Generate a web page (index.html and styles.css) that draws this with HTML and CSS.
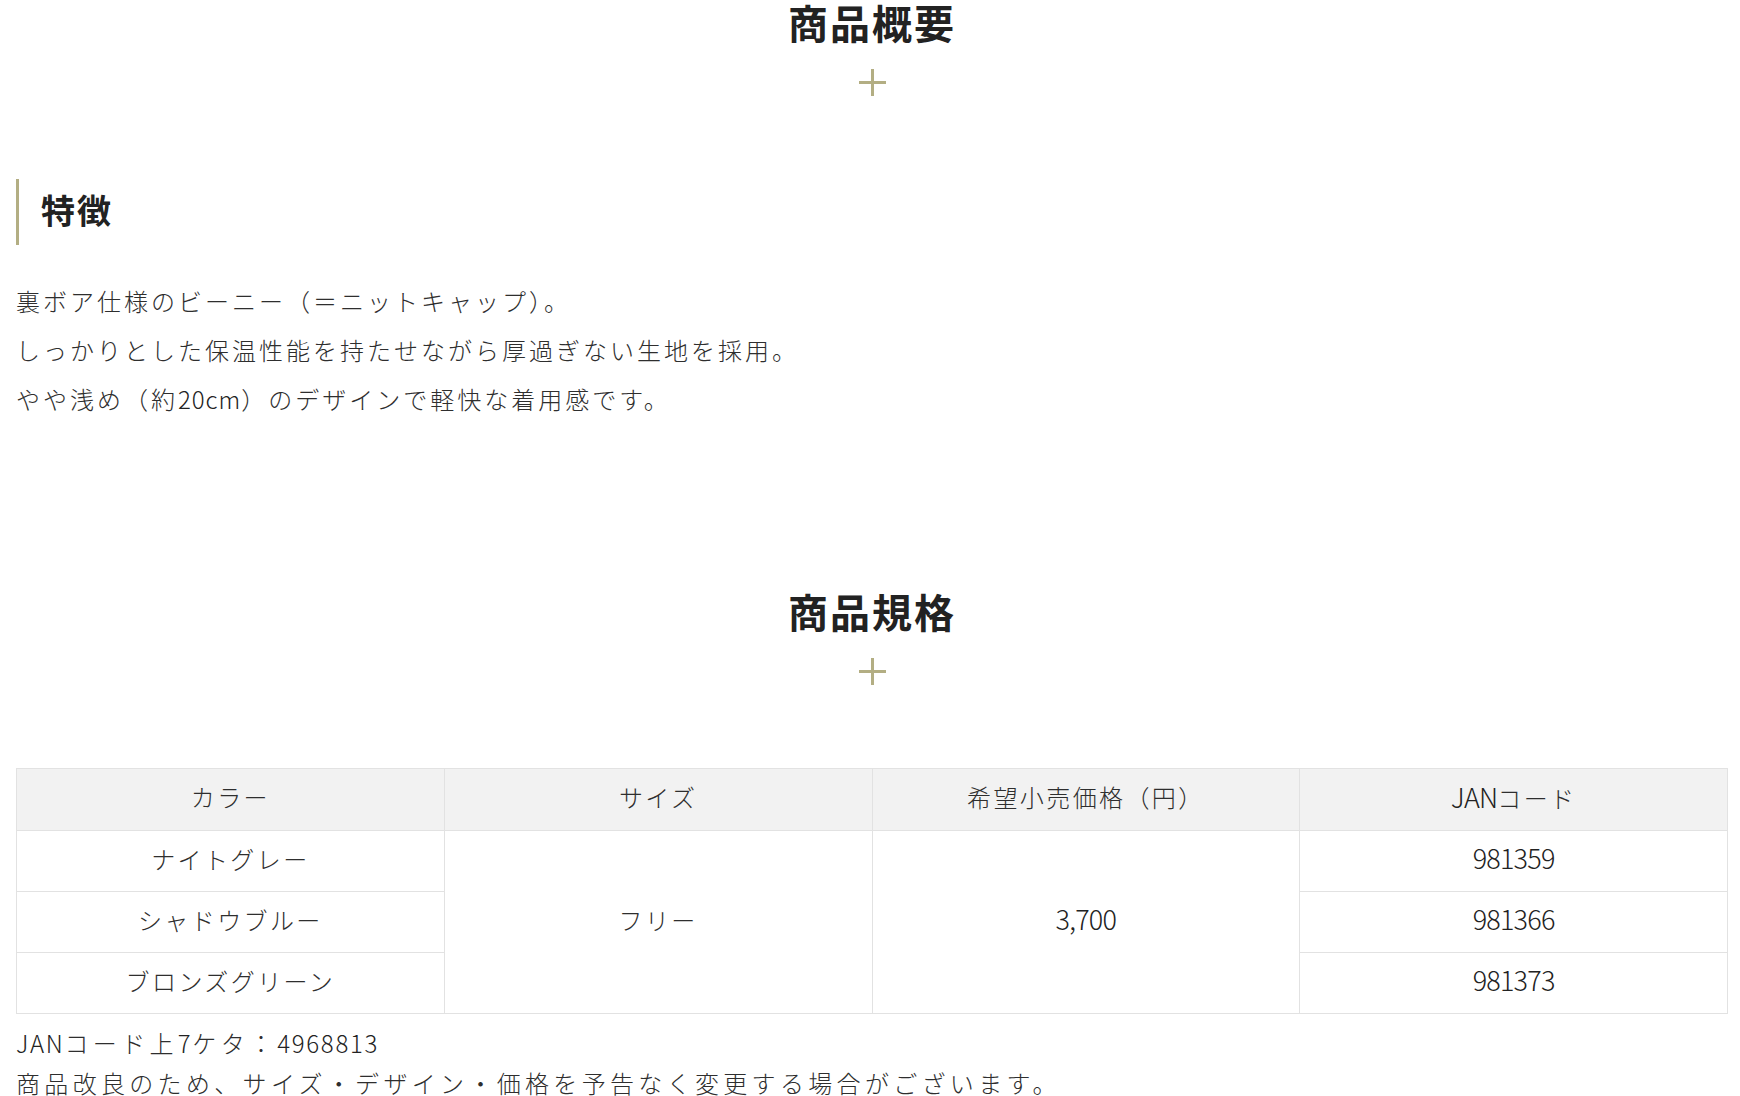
FILE: index.html
```html
<!DOCTYPE html>
<html lang="ja">
<head>
<meta charset="utf-8">
<title>商品概要</title>
<link rel="stylesheet" href="styles.css">
</head>
<body>
<div class="page">
  <section class="overview">
    <h2 class="sec-title">商品概要</h2>
    <div class="plus"></div>
    <h3 class="feature-title">特徴</h3>
    <p class="feature-text">裏ボア仕様のビーニー（＝ニットキャップ）。<br>しっかりとした保温性能を持たせながら厚過ぎない生地を採用。<br>やや浅め（約<span class="latin">20cm</span>）のデザインで軽快な着用感です。</p>
  </section>
  <section class="spec">
    <h2 class="sec-title">商品規格</h2>
    <div class="plus"></div>
    <table class="spec-table">
      <thead>
        <tr>
          <th>カラー</th>
          <th>サイズ</th>
          <th>希望小売価格（円）</th>
          <th><span class="num">JAN</span>コード</th>
        </tr>
      </thead>
      <tbody>
        <tr>
          <td>ナイトグレー</td>
          <td rowspan="3">フリー</td>
          <td rowspan="3"><span class="num">3,700</span></td>
          <td><span class="num">981359</span></td>
        </tr>
        <tr>
          <td>シャドウブルー</td>
          <td><span class="num">981366</span></td>
        </tr>
        <tr>
          <td>ブロンズグリーン</td>
          <td><span class="num">981373</span></td>
        </tr>
      </tbody>
    </table>
    <p class="note"><span class="note-latin">JAN</span>コード上<span class="note-latin">7</span>ケタ：<span class="note-latin">4968813</span><br>商品改良のため、サイズ・デザイン・価格を予告なく変更する場合がございます。</p>
  </section>
</div>
</body>
</html>
```

FILE: styles.css
```css
html, body {
  margin: 0;
  padding: 0;
  background: #fff;
}

body {
  font-family: "Noto Sans CJK JP", "Noto Sans", sans-serif;
  color: #2e2e2e;
  font-weight: 300;
}

.page {
  padding: 0 12px 0 16px;
}

.sec-title {
  margin: -2px 0 0;
  font-size: 40px;
  line-height: 48px;
  font-weight: 700;
  letter-spacing: 2px;
  text-align: center;
  color: #222;
}

.plus {
  width: 27px;
  height: 27px;
  margin: 23px auto 0;
  background:
    linear-gradient(#b3ae83, #b3ae83) center / 3px 100% no-repeat,
    linear-gradient(#b3ae83, #b3ae83) center / 100% 3px no-repeat;
}

.feature-title {
  box-sizing: border-box;
  margin: 83px 0 0;
  height: 66px;
  display: flex;
  align-items: center;
  padding: 0 0 6px 22px;
  border-left: 3px solid #b3ae83;
  font-size: 34px;
  font-weight: 700;
  letter-spacing: 2px;
  color: #222;
}

.feature-text {
  margin: 31px 0 0;
  font-size: 24px;
  line-height: 49px;
  letter-spacing: 0.125em;
}

.latin {
  letter-spacing: 0.04em;
  color: #222;
}

.spec {
  margin-top: 166px;
}

.spec-table {
  margin-top: 83px;
  width: 100%;
  table-layout: fixed;
  border-collapse: collapse;
  font-size: 24px;
  letter-spacing: 0.1em;
}

.spec-table th,
.spec-table td {
  border: 1px solid #e2e2e2;
  padding: 0 0 5px;
  text-align: center;
  vertical-align: middle;
  font-weight: 300;
  line-height: 36px;
}

.spec-table th {
  height: 56px;
  background: #f2f2f2;
}

.spec-table td {
  height: 55px;
}

.num {
  font-size: 27px;
  letter-spacing: -0.8px;
  color: #222;
}

.note {
  margin: 9px 0 0;
  font-size: 24px;
  line-height: 40px;
  letter-spacing: 0.18em;
}

.note-latin {
  letter-spacing: 0.07em;
  color: #222;
}
```
